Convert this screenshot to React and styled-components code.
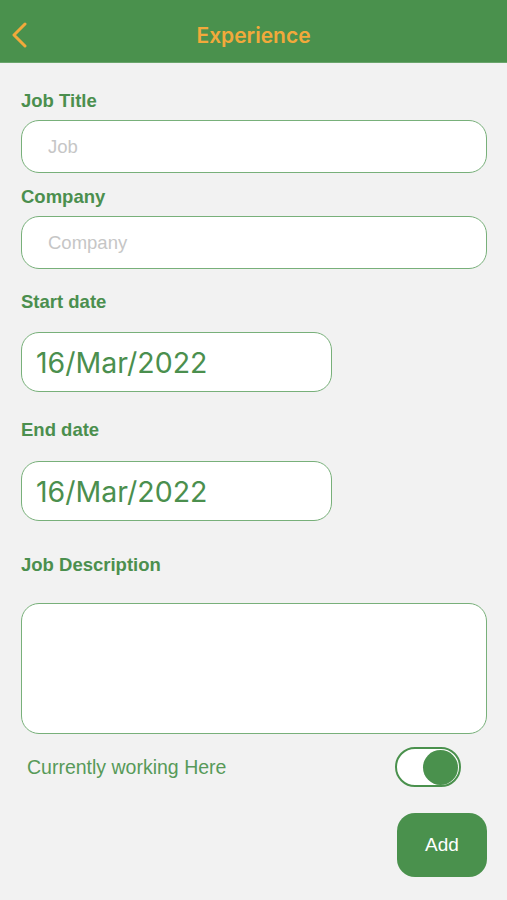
import styled, { createGlobalStyle } from "styled-components";
import { useState } from "react";

const GlobalStyle = createGlobalStyle`
  html, body {
    margin: 0;
    padding: 0;
    background: #f2f2f2;
    font-family: "Liberation Sans", Arial, sans-serif;
  }
  * {
    box-sizing: border-box;
  }
`;

const green = "#4a914d";
const labelGreen = "#4b8f4e";
const borderGreen = "#78b07a";

const Screen = styled.div`
  width: 507px;
  min-height: 900px;
  background: #f2f2f2;
  display: flex;
  flex-direction: column;
`;

const Header = styled.header`
  height: 63px;
  background: ${green};
  display: grid;
  grid-template-columns: 60px 1fr 60px;
  align-items: center;
  border-bottom: 1px solid #6aa56c;
`;

const BackButton = styled.button`
  background: none;
  border: none;
  padding: 8px 0 0 10px;
  display: flex;
  align-items: center;
  height: 100%;
  cursor: pointer;
`;

const Title = styled.h1`
  margin: 0;
  text-align: center;
  color: #f2a93b;
  font-size: 21px;
  font-weight: 600;
  font-family: "Inter", "Liberation Sans", sans-serif;
  padding-top: 8px;
`;

const Form = styled.form`
  display: flex;
  flex-direction: column;
  padding: 27px 20px 0 21px;
`;

const Label = styled.label`
  display: block;
  color: ${labelGreen};
  font-size: 18.5px;
  font-weight: 700;
  line-height: 21px;
  margin-top: ${(p) => p.$gap || 0}px;
  margin-bottom: ${(p) => p.$below || 9}px;
`;

const TextInput = styled.input`
  width: 100%;
  height: 53px;
  border: 1.5px solid ${borderGreen};
  border-radius: 18px;
  background: #fff;
  padding: 0 26px;
  font-size: 18.5px;
  font-family: "Liberation Sans", Arial, sans-serif;
  color: #333;
  outline: none;

  &::placeholder {
    color: #c6c6c6;
  }
`;

const DateBox = styled.div`
  width: 311px;
  height: 60px;
  border: 1.5px solid ${borderGreen};
  border-radius: 18px;
  background: #fff;
  display: flex;
  align-items: center;
  padding-left: 14px;
  color: ${labelGreen};
  font-size: 28.5px;
  font-family: "Inter", "Liberation Sans", sans-serif;
  font-weight: 400;
`;

const TextArea = styled.textarea`
  width: 100%;
  height: 131px;
  border: 1.5px solid ${borderGreen};
  border-radius: 18px;
  background: #fff;
  resize: none;
  outline: none;
  padding: 12px 16px;
  font-size: 17px;
  font-family: "Liberation Sans", Arial, sans-serif;
`;

const ToggleRow = styled.div`
  display: flex;
  align-items: center;
  justify-content: space-between;
  margin-top: 13px;
  padding: 0 26px 0 6px;
`;

const ToggleText = styled.span`
  color: #579a59;
  font-size: 19.5px;
`;

const Switch = styled.button`
  width: 66px;
  height: 40px;
  border-radius: 20px;
  border: 2px solid ${green};
  background: #fff;
  padding: 0 1px;
  display: flex;
  align-items: center;
  justify-content: ${(p) => (p.$on ? "flex-end" : "flex-start")};
  cursor: pointer;
`;

const Knob = styled.span`
  width: 35px;
  height: 35px;
  border-radius: 50%;
  background: ${green};
`;

const Actions = styled.div`
  display: flex;
  justify-content: flex-end;
  margin-top: 26px;
`;

const AddButton = styled.button`
  width: 90px;
  height: 64px;
  border: none;
  border-radius: 18px;
  background: ${green};
  color: #fff;
  font-size: 19px;
  font-family: "Liberation Sans", Arial, sans-serif;
  cursor: pointer;
`;

const App = () => {
  const [working, setWorking] = useState(true);

  return (
    <Screen>
      <GlobalStyle />
      <Header>
        <BackButton type="button" aria-label="Back">
          <svg width="20" height="26" viewBox="0 0 20 26">
            <path
              d="M15 2 L4 13 L15 24"
              fill="none"
              stroke="#f2a93b"
              strokeWidth="3"
              strokeLinecap="round"
              strokeLinejoin="round"
            />
          </svg>
        </BackButton>
        <Title>Experience</Title>
        <span />
      </Header>
      <Form onSubmit={(e) => e.preventDefault()}>
        <Label>Job Title</Label>
        <TextInput placeholder="Job" />

        <Label $gap={13}>Company</Label>
        <TextInput placeholder="Company" />

        <Label $gap={22} $below={20}>Start date</Label>
        <DateBox>16/Mar/2022</DateBox>

        <Label $gap={27} $below={21}>End date</Label>
        <DateBox>16/Mar/2022</DateBox>

        <Label $gap={33} $below={28}>Job Description</Label>
        <TextArea />

        <ToggleRow>
          <ToggleText>Currently working Here</ToggleText>
          <Switch
            type="button"
            $on={working}
            onClick={() => setWorking(!working)}
          >
            <Knob />
          </Switch>
        </ToggleRow>

        <Actions>
          <AddButton type="submit">Add</AddButton>
        </Actions>
      </Form>
    </Screen>
  );
};

export default App;
